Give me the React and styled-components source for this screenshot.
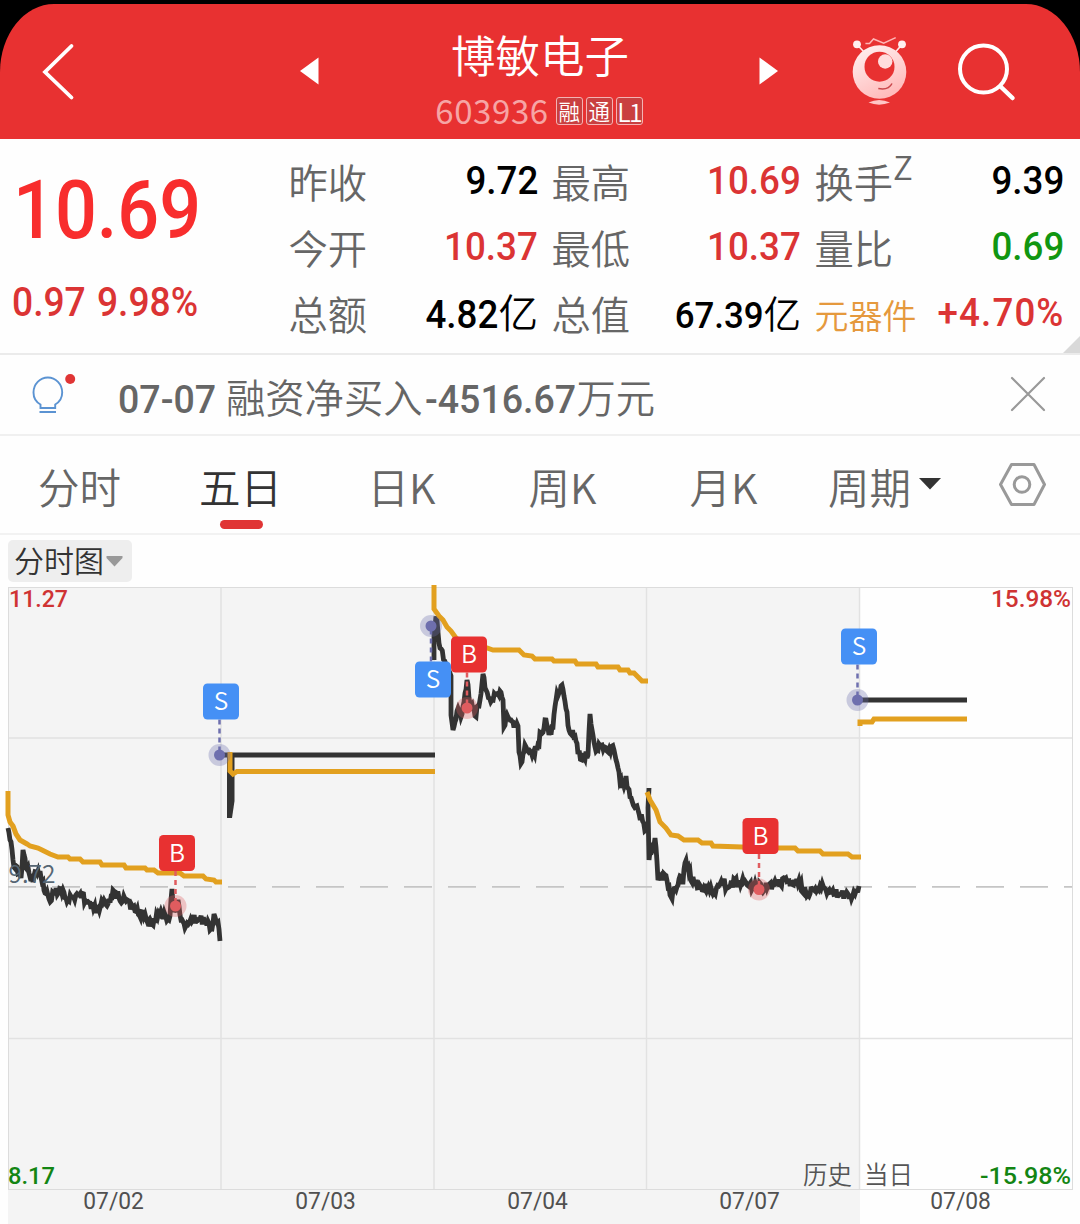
import React from "react";
import styled, { createGlobalStyle } from "styled-components";

const RED = "#e83131";
const BLUE = "#4590f5";
const GOLD = "#e2a01f";
const INK = "#333333";

const stats = [
  [
    { label: "昨收", value: "9.72" },
    { label: "今开", value: "10.37", color: "#db3434" },
    { label: "总额", value: "4.82", unit: "亿" },
  ],
  [
    { label: "最高", value: "10.69", color: "#db3434" },
    { label: "最低", value: "10.37", color: "#db3434" },
    { label: "总值", value: "67.39", unit: "亿", small: true },
  ],
  [
    { label: "换手", sup: "Z", value: "9.39" },
    { label: "量比", value: "0.69", color: "#119611" },
    { label: "元器件", value: "+4.70%", color: "#db3434", sector: true },
  ],
];

const tabs = ["分时", "五日", "日K", "周K", "月K", "周期"];
const days = ["07/02", "07/03", "07/04", "07/07", "07/08"];

const prices = [
  [[8, 828], [10, 840], [13, 860], [18, 874], [21, 878], [23, 850], [26, 868], [29, 873], [33, 882], [36, 872], [40, 871], [45, 893], [49, 899], [55, 893], [63, 890], [68, 900], [78, 895], [90, 903], [97, 909], [104, 900], [108, 904], [113, 890], [119, 898], [125, 899], [135, 911], [144, 917], [152, 924], [162, 914], [168, 919], [170, 916], [172, 889], [174, 912], [178, 900], [181, 920], [186, 926], [193, 920], [200, 919], [208, 921], [212, 929], [214, 914], [218, 922], [220, 941]],
  [[434, 660], [434, 624], [437, 620], [440, 648], [447, 670], [451, 676], [451, 715], [453, 730], [457, 711], [461, 717], [464, 702], [467, 680], [470, 704], [475, 716], [480, 700], [483, 674], [486, 690], [492, 700], [500, 691], [503, 700], [504, 727], [508, 717], [513, 722], [518, 726], [519, 752], [522, 762], [525, 745], [531, 752], [537, 750], [541, 733], [546, 720], [549, 735], [553, 727], [556, 700], [561, 686], [564, 696], [567, 712], [569, 730], [575, 736], [578, 754], [584, 757], [588, 755], [590, 714], [594, 742], [597, 750], [602, 745], [608, 752], [614, 750], [619, 772], [622, 788], [626, 776], [630, 797], [638, 810], [646, 830]],
  [[649, 788], [648, 808], [649, 860], [655, 838], [657, 862], [658, 880], [665, 875], [668, 887], [671, 897], [676, 890], [680, 876], [683, 882], [685, 863], [689, 873], [694, 882], [702, 890], [706, 884], [713, 894], [720, 884], [729, 887], [735, 880], [745, 881], [754, 887], [765, 888], [776, 884], [788, 881], [800, 885], [808, 895], [813, 889], [820, 886], [828, 891], [835, 894], [848, 894], [855, 894], [859, 886]],
];

const flatPrices = [
  "219,755 435,755",
  "858,700 967,700",
];

const averages = [
  "8,791 8,815 10,822 13,826 16,834 20,840 27,844 30,846 38,848 42,850 50,854 58,857 68,857 70,859 80,859 83,862 100,862 102,865 124,865 126,868 145,868 147,870 154,870 158,873 180,873 184,876 203,876 206,879 214,880 216,882 222,882",
  "230,752 230,771 233,774 237,771.5 435,771.5",
  "434,585 434,609 439,616 443,620 447,627 451,631 456,638 468,646 487,648 493,650 519,650 524,655 532,656 535,659 552,659 554,661 575,661 577,664 596,664 598,667 618,667 620,670 628,670 630,673 634,673 642,681 648,681",
  "647,792 650,800 656,810 660,822 666,828 671,835 678,836 684,840 698,840 702,843 711,843 713,846 774,848 795,848 798,851 820,851 823,854 848,854 852,857 861,857",
  "860,726 860,722 872,722 874,719 967,719",
];

const trades = [
  { type: "B", x: 177, y: 853, px: 175.5, py: 906 },
  { type: "S", x: 221, y: 701.5, px: 219.5, py: 755 },
  { type: "S", x: 433, y: 679.5, px: 431, py: 626 },
  { type: "B", x: 469, y: 654.5, px: 467, py: 708 },
  { type: "B", x: 760.5, y: 836, px: 759, py: 889.5 },
  { type: "S", x: 859, y: 646.5, px: 857.5, py: 700 },
];

// minute ticks between the key prices
const ticks = (points) => {
  const res = [];
  let seed = 7;
  for (let i = 0; i < points.length - 1; i++) {
    const [x1, y1] = points[i];
    const [x2, y2] = points[i + 1];
    const steps = Math.max(1, Math.round((x2 - x1) / 1.1));
    for (let s = 0; s < steps; s++) {
      seed = (seed * 73 + 41) % 101;
      const swing = s === 0 ? 0 : (seed / 101 - 0.5) * 10;
      res.push(
        `${(x1 + ((x2 - x1) * s) / steps).toFixed(1)},${(
          y1 + ((y2 - y1) * s) / steps + swing
        ).toFixed(1)}`
      );
    }
  }
  res.push(points[points.length - 1].join(","));
  return res.join(" ");
};

const Robot = () => (
  <svg width="60" height="70" viewBox="850 37 60 70">
    <defs>
      <linearGradient id="body" x1="0" y1="0" x2="0.5" y2="1">
        <stop offset="0" stopColor="#fff4f4" />
        <stop offset="1" stopColor="#ffbcbc" />
      </linearGradient>
    </defs>
    <path d="M857 45.500L864 53M902 45.500L895.500 53" stroke="#ffe9e9" strokeWidth="1.600" />
    <circle cx="857" cy="45.300" r="3.900" fill="#fff0f0" />
    <circle cx="902" cy="45.300" r="3.900" fill="#fff0f0" />
    <path d="M865.400 44.500H869.500L873.500 40L883.700 44.300L895.700 38.600" fill="none" stroke="#ffb5b5" strokeWidth="1.500" />
    <circle cx="879.500" cy="73" r="26.800" fill="url(#body)" />
    <circle cx="879.500" cy="67.700" r="15" fill={RED} />
    <circle cx="885.200" cy="62.500" r="7.200" fill="#ffdcdc" />
    <path d="M878.300 89.500Q888.500 91.500 892 84.500" fill="none" stroke="#c9474b" strokeWidth="1.500" />
    <path d="M868.500 103.600Q879 98.500 890 103.600Q879 107.800 868.500 103.600Z" fill="#ffc6c6" />
  </svg>
);

const Chart = () => (
  <Plot viewBox="0 582 1080 608">
    <rect x="8" y="587" width="852" height="603" fill="#f4f4f4" />
    <g stroke="#e2e2e2" strokeWidth="1.500">
      {[221, 434, 646.5, 859.5].map((x) => (
        <line key={x} x1={x} x2={x} y1="587" y2="1189" />
      ))}
      <line x1="8" x2="1072" y1="738" y2="738" />
      <line x1="8" x2="1072" y1="1038.500" y2="1038.500" />
      <rect x="8.500" y="587.500" width="1064" height="602" fill="none" stroke="#dcdcdc" strokeWidth="1" />
    </g>
    <line x1="8" x2="1072" y1="886.800" y2="886.800" stroke="#c5c5c5" strokeWidth="1.800" strokeDasharray="28 16" />
    <g fill="none" stroke={INK} strokeWidth="4.800">
      {prices.map((p) => (
        <polyline key={p[0][0]} points={ticks(p)} />
      ))}
      {flatPrices.map((p) => (
        <polyline key={p} points={p} />
      ))}
    </g>
    <path d="M227 755H234.500V801L232 818H227Z" fill={INK} />
    <g fill="none" stroke={GOLD} strokeWidth="5">
      {averages.map((p) => (
        <polyline key={p} points={p} />
      ))}
    </g>
    <AxisText x="8.500" y="883" fill="#566673" $cjk>9.72</AxisText>
    {trades.map((t) => {
      const buy = t.type === "B";
      const dot = buy ? "#e05c5f" : "#6e6fae";
      return (
        <g key={t.px}>
          <line x1={t.px} x2={t.px} y1={t.y} y2={t.py} stroke={dot} strokeWidth="2.500" strokeDasharray="5 4" />
          <circle cx={t.px} cy={t.py} r="11" fill={dot} opacity="0.32" />
          <circle cx={t.px} cy={t.py} r="5.500" fill={dot} />
          <rect x={t.x - 18} y={t.y - 18} width="36" height="36" rx="4.500" fill={buy ? RED : BLUE} />
          <BadgeText x={t.x} y={t.y + 8.5}>{t.type}</BadgeText>
        </g>
      );
    })}
    <AxisText x="9" y="607" fill="#cf3333" textLength="59" lengthAdjust="spacingAndGlyphs">11.27</AxisText>
    <AxisText x="991" y="607" fill="#cf3333" textLength="80" lengthAdjust="spacingAndGlyphs">15.98%</AxisText>
    <AxisText x="8" y="1184" fill="#138513" textLength="47" lengthAdjust="spacingAndGlyphs">8.17</AxisText>
    <AxisText x="980" y="1184" fill="#138513" textLength="91" lengthAdjust="spacingAndGlyphs">-15.98%</AxisText>
    <AxisText x="803" y="1184" fill="#555" $cjk>历史</AxisText>
    <AxisText x="864" y="1184" fill="#555" $cjk>当日</AxisText>
  </Plot>
);

const App = () => (
  <Page>
    <GlobalStyle />
    <HeaderBack>
      <Header>
        <IconButton>
          <svg width="40" height="64" viewBox="38 40 40 64">
            <path d="M71.500 46L45 72L71.500 97.500" fill="none" stroke="#fff" strokeWidth="3.800" strokeLinecap="round" />
          </svg>
        </IconButton>
        <Pager>
          <svg width="20" height="28" viewBox="0 0 20 28">
            <path d="M1 14L19.500 0.500V27.500Z" fill="#fff" />
          </svg>
          <Title>
            <h1>博敏电子</h1>
            <Code>
              603936
              <Tags>
                <Tag>融</Tag>
                <Tag>通</Tag>
                <Tag $latin>L1</Tag>
              </Tags>
            </Code>
          </Title>
          <svg width="20" height="28" viewBox="0 0 20 28">
            <path d="M19 14L0.500 0.500V27.500Z" fill="#fff" />
          </svg>
        </Pager>
        <Actions>
          <Robot />
          <svg width="64" height="64" viewBox="954 40 64 64">
            <circle cx="983.500" cy="69" r="23.500" fill="none" stroke="#fff" strokeWidth="4" />
            <path d="M1000.500 86.500L1012.500 98" stroke="#fff" strokeWidth="4.500" strokeLinecap="round" />
          </svg>
        </Actions>
      </Header>
    </HeaderBack>

    <Quote>
      <Last>
        <Price>10.69</Price>
        <Change>
          <span>0.97</span>
          <span>9.98%</span>
        </Change>
      </Last>
      <Stats>
        {stats.map((col) => (
          <StatColumn key={col[0].label}>
            {col.map((s) => (
              <Stat key={s.label}>
                <StatLabel $sector={s.sector}>
                  {s.label}
                  {s.sup && <sup>{s.sup}</sup>}
                </StatLabel>
                <StatValue $color={s.color} $small={s.small} $sector={s.sector}>
                  <Num>{s.value}</Num>
                  {s.unit}
                </StatValue>
              </Stat>
            ))}
          </StatColumn>
        ))}
      </Stats>
      <Corner />
    </Quote>

    <Tip>
      <svg width="48" height="44" viewBox="30 372 48 44">
        <path d="M40.500 408V404.500C36 402 33.500 397.500 33.500 392.500A14.300 15 0 0 1 62.200 392.500C62.200 397.500 59.500 402 55.200 404.500V408ZM39.500 412H56" fill="none" stroke="#5b93d2" strokeWidth="1.900" />
        <circle cx="70.200" cy="379" r="5" fill="#e03535" />
      </svg>
      <TipText>
        <TipNum $width={108}>07-07</TipNum>
        融资净买入
        <TipNum $width={151} $indent={3}>-4516.67</TipNum>
        万元
      </TipText>
      <svg width="36" height="36" viewBox="0 0 36 36">
        <path d="M2 2L34 34M34 2L2 34" stroke="#999" strokeWidth="2.200" strokeLinecap="round" />
      </svg>
    </Tip>

    <Tabs>
      {tabs.map((t) => (
        <Tab key={t} $active={t === "五日"}>
          {t}
          {t === "周期" && (
            <svg width="22" height="12" viewBox="0 0 22 12">
              <path d="M0 0H22L11 11.500Z" fill={INK} />
            </svg>
          )}
        </Tab>
      ))}
      <Settings>
        <svg width="48" height="46" viewBox="998 462 48 46">
          <path d="M1011.500 464.500H1034L1044.500 484.500L1034 504.500H1011.500L1000.500 484.500Z" fill="none" stroke="#999" strokeWidth="3" strokeLinejoin="round" />
          <circle cx="1022" cy="484.500" r="7.800" fill="none" stroke="#999" strokeWidth="3" />
        </svg>
      </Settings>
    </Tabs>

    <ChartBar>
      <ChartType>
        <span>分时图</span>
        <svg width="17" height="11" viewBox="0 0 17 11">
          <path d="M0.500 0H16.500V2L8.500 10.500L0.500 2Z" fill="#999" />
        </svg>
      </ChartType>
    </ChartBar>
    <Chart />
    <Dates>
      {days.map((d) => (
        <DateCell key={d}>
          <Num>{d}</Num>
        </DateCell>
      ))}
    </Dates>
  </Page>
);

export default App;

const GlobalStyle = createGlobalStyle`
  * {
    box-sizing: border-box;
  }
  body {
    margin: 0;
    background-color: #fff;
    font-family: "Noto Sans CJK SC", sans-serif;
    font-weight: 350;
  }
  svg {
    display: block;
    flex: none;
  }
`;

const Page = styled.div`
  width: 1080px;
  height: 1224px;
  overflow: hidden;
  background-color: #fefefe;
`;

const HeaderBack = styled.div`
  height: 139px;
  padding-top: 4px;
  background-color: #000;
`;

const Header = styled.header`
  display: flex;
  height: 135px;
  border-radius: 54px 54px 0 0 / 68px 68px 0 0;
  background-color: ${RED};
  color: #fff;
`;

const IconButton = styled.div`
  width: 299px;
  padding: 36px 0 0 38px;
`;

const Pager = styled.div`
  display: flex;
  justify-content: space-between;
  width: 480px;

  > svg {
    margin-top: 53px;
  }
`;

const Title = styled.div`
  display: flex;
  flex-direction: column;
  align-items: center;

  h1 {
    margin: 20px 0 0 2px;
    font-size: 44.5px;
    font-weight: 350;
    line-height: 60px;
  }
`;

const Code = styled.div`
  display: flex;
  align-items: center;
  height: 40px;
  margin-top: 6px;
  color: #f6a5a5;
  font-size: 33px;
  font-weight: 400;
  letter-spacing: 0.6px;
`;

const Tags = styled.div`
  display: flex;
  gap: 3px;
  margin: 2px 0 0 7px;
  font-weight: 350;
`;

const Tag = styled.span`
  display: flex;
  align-items: center;
  justify-content: center;
  width: 27px;
  height: 28px;
  border: 1px solid #f3b3b3;
  border-radius: 3px;
  background-color: #c94040;
  color: #fff;
  font-size: ${(props) => (props.$latin ? "25px" : "21.5px")};
  letter-spacing: ${(props) => (props.$latin ? "-1.5px" : "0")};
  line-height: 24px;
`;

const Actions = styled.div`
  display: flex;
  gap: 44px;
  padding: 32px 0 0 71px;

  svg + svg {
    margin-top: 4px;
  }
`;

const Quote = styled.section`
  position: relative;
  display: flex;
  height: 216px;
  border-bottom: 2px solid #ebebeb;
`;

const Last = styled.div`
  width: 288px;
  padding: 30px 0 0 12px;
  color: #db3434;
  font-family: Roboto, sans-serif;
  font-weight: 500;
`;

const Price = styled.div`
  width: max-content;
  margin-left: 1px;
  color: #f82d2d;
  font-size: 81px;
  line-height: 84px;
  transform: scaleX(0.91);
  transform-origin: left;
`;

const Change = styled.div`
  display: flex;
  gap: 12px;
  width: max-content;
  margin-top: 28px;
  font-size: 40px;
  line-height: 44px;
  transform: scaleX(0.93);
  transform-origin: left;
`;

const Stats = styled.div`
  display: flex;
  gap: 13px;
`;

const StatColumn = styled.div`
  width: 250px;
  padding-top: 9px;
`;

const Stat = styled.div`
  display: flex;
  align-items: center;
  justify-content: space-between;
  height: 66px;
  white-space: nowrap;
`;

const StatLabel = styled.span`
  margin-left: 0.5px;
  padding-top: ${(props) => (props.$sector ? "4px" : "0")};
  color: ${(props) => (props.$sector ? "#e5993d" : "#666")};
  font-size: ${(props) => (props.$sector ? "34px" : "39.3px")};
  line-height: 64px;

  sup {
    font-size: 33px;
    line-height: 0;
    vertical-align: 18px;
  }
`;

const StatValue = styled.span`
  display: flex;
  align-items: baseline;
  margin-right: ${(props) => (props.$sector ? "-1px" : "0")};
  color: ${(props) => props.$color || "#000"};
  font-size: ${(props) => (props.$small ? "37.5px" : "39.5px")};
  letter-spacing: ${(props) => (props.$sector ? "1.2px" : "0")};
  line-height: ${(props) => (props.$small ? "64px" : "58px")};
`;

const Num = styled.span`
  font-family: Roboto, sans-serif;
  font-weight: 500;
  transform: scaleX(0.93);
  transform-origin: right;
`;

const Corner = styled.div`
  position: absolute;
  right: 0;
  bottom: 0;
  border-bottom: 17px solid #d9d9d9;
  border-left: 17px solid transparent;
`;

const Tip = styled.section`
  display: flex;
  align-items: center;
  height: 81px;
  padding: 0 34px 2px 30px;
  border-bottom: 2px solid #f0f0f0;
`;

const TipText = styled.div`
  display: flex;
  align-items: baseline;
  flex: 1;
  padding: 3px 0 0 40px;
  color: #666;
  font-size: 39.3px;
  white-space: nowrap;
`;

const TipNum = styled.span`
  width: ${(props) => props.$width}px;
  margin-left: ${(props) => props.$indent || 0}px;
  font-family: Roboto, sans-serif;
  font-weight: 500;
  transform: scaleX(0.955);
  transform-origin: left;
`;

const Tabs = styled.nav`
  display: flex;
  height: 99px;
  border-bottom: 2px solid #f2f2f2;
`;

const Tab = styled.div`
  position: relative;
  display: flex;
  align-items: center;
  justify-content: center;
  gap: 8px;
  width: 161px;
  padding: 3px 2px 0 0;
  color: ${(props) => (props.$active ? "#333" : "#666")};
  font-size: 41.5px;

  svg {
    margin-top: -4px;
  }

  &::after {
    content: "";
    display: ${(props) => (props.$active ? "block" : "none")};
    position: absolute;
    bottom: 4px;
    left: 59px;
    width: 43px;
    height: 9px;
    border-radius: 5px;
    background-color: #e03535;
  }
`;

const Settings = styled.div`
  display: flex;
  align-items: center;
  justify-content: center;
  width: 112px;
`;

const ChartBar = styled.div`
  height: 47px;
  padding: 5px 8px 0;
`;

const ChartType = styled.div`
  display: flex;
  align-items: center;
  gap: 2px;
  width: 124px;
  height: 42px;
  padding-left: 6px;
  border-radius: 5px;
  background-color: #eeeeee;
  color: #333;
  font-size: 30px;

  span {
    height: 42px;
    line-height: 38px;
  }
`;

const Plot = styled.svg`
  width: 1080px;
  height: 608px;
`;

const AxisText = styled.text`
  font-family: ${(props) =>
    props.$cjk ? '"Noto Sans CJK SC", sans-serif' : "Roboto, sans-serif"};
  font-size: 24.5px;
  font-weight: ${(props) => (props.$cjk ? 350 : 500)};
`;

const BadgeText = styled.text`
  fill: #fff;
  font-size: 24.5px;
  text-anchor: middle;
`;

const Dates = styled.div`
  display: flex;
  width: 1064px;
  height: 34px;
  margin-left: 8px;
  background: linear-gradient(to right, #f4f4f4 852px, transparent 852px);
`;

const DateCell = styled.div`
  width: 211.8px;
  color: #505050;
  font-size: 24.5px;
  line-height: 18px;
  text-align: center;

  span {
    display: inline-block;
    font-weight: 400;
    transform-origin: center;
  }
`;
